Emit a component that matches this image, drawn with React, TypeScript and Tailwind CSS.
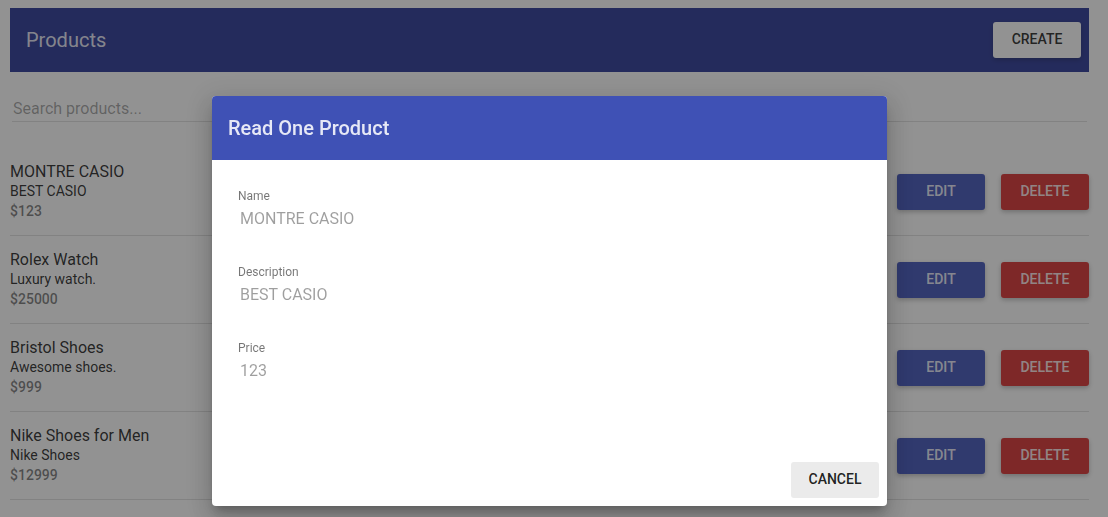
import React from "react";

type Product = { name: string; description: string; price: number };

const products: Product[] = [
  { name: "MONTRE CASIO", description: "BEST CASIO", price: 123 },
  { name: "Rolex Watch", description: "Luxury watch.", price: 25000 },
  { name: "Bristol Shoes", description: "Awesome shoes.", price: 999 },
  { name: "Nike Shoes for Men", description: "Nike Shoes", price: 12999 },
];

const tones = {
  plain: "bg-[#fafafa] text-black/87 shadow-[0_2px_5px_rgba(0,0,0,0.26)]",
  primary: "bg-[#3f51b5] text-white/87 shadow-[0_2px_5px_rgba(0,0,0,0.26)]",
  warn: "bg-[#d32f2f] text-white/87 shadow-[0_2px_5px_rgba(0,0,0,0.26)]",
  flat: "bg-[#ebebeb] text-black/87",
};

function Button({ tone, children }: { tone: keyof typeof tones; children: string }) {
  return (
    <button
      type="button"
      className={`h-9 min-w-22 shrink-0 rounded-[3px] px-2 pb-0.5 text-center text-sm font-medium uppercase ${tones[tone]}`}
    >
      {children}
    </button>
  );
}

function ProductRow({ product }: { product: Product }) {
  return (
    <li className="flex items-center gap-4 py-3.5 shadow-[inset_0_-1px_0_rgba(0,0,0,0.12)]">
      <div className="min-w-0 flex-1 pb-px">
        <h3 className="text-base leading-[19px] text-black/87">{product.name}</h3>
        <h4 className="text-sm leading-5 text-black/87">{product.description}</h4>
        <p className="text-sm leading-5 font-medium text-black/54">${product.price}</p>
      </div>
      <Button tone="primary">Edit</Button>
      <Button tone="warn">Delete</Button>
    </li>
  );
}

function Field({ id, label, value }: { id: string; label: string; value: string }) {
  return (
    <div className="flex h-[76px] flex-col">
      <label htmlFor={id} className="text-xs leading-4 text-black/54">
        {label}
      </label>
      <input
        id={id}
        disabled
        value={value}
        readOnly
        className="h-7 w-full bg-transparent px-0.5 text-base text-black/38"
      />
    </div>
  );
}

export default function App() {
  return (
    <div className="min-h-screen bg-[#fafafa] font-['Roboto',sans-serif]">
      <main className="pt-2 pr-[19px] pl-2.5">
        <header className="flex h-16 items-center justify-between bg-[#283593] pr-2 pl-4">
          <h1 className="text-xl text-white/87">Products</h1>
          <Button tone="plain">Create</Button>
        </header>
        <div className="px-0.5 pt-6">
          <input
            type="text"
            aria-label="Search products"
            placeholder="Search products..."
            className="block h-[26px] w-full border-b border-black/12 bg-transparent px-px text-base outline-none placeholder:text-black/38"
          />
        </div>
        <ul className="pt-[26px]">
          {products.map((product) => (
            <ProductRow key={product.name} product={product} />
          ))}
        </ul>
      </main>

      <div className="fixed inset-0 flex items-start justify-center bg-[#212121]/48 pt-24 pr-[19px] pl-2.5">
        <section
          role="dialog"
          aria-modal="true"
          aria-labelledby="dialog-title"
          className="w-full max-w-[675px] overflow-hidden rounded bg-white shadow-[0_7px_8px_-4px_rgba(0,0,0,0.2),0_13px_19px_2px_rgba(0,0,0,0.14),0_5px_24px_4px_rgba(0,0,0,0.12)]"
        >
          <header className="flex h-16 items-center bg-[#3f51b5] px-4">
            <h2 id="dialog-title" className="text-xl font-medium text-white/87">
              Read One Product
            </h2>
          </header>
          <form className="px-[26px] pt-7 pb-[46px]">
            <Field id="name" label="Name" value="MONTRE CASIO" />
            <Field id="description" label="Description" value="BEST CASIO" />
            <Field id="price" label="Price" value="123" />
          </form>
          <footer className="flex justify-end p-2 pt-0">
            <Button tone="flat">Cancel</Button>
          </footer>
        </section>
      </div>
    </div>
  );
}
